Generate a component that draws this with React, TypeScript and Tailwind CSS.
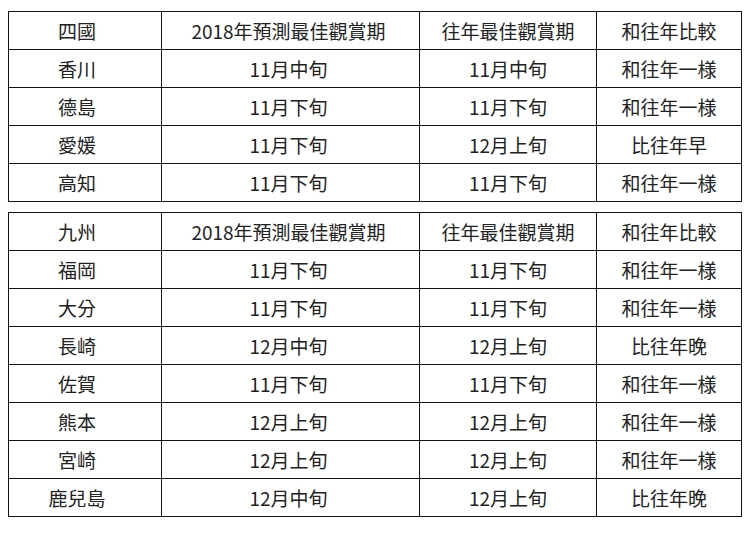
const shikoku = [
  ["四國", "2018年預測最佳觀賞期", "往年最佳觀賞期", "和往年比較"],
  ["香川", "11月中旬", "11月中旬", "和往年一様"],
  ["德島", "11月下旬", "11月下旬", "和往年一様"],
  ["愛媛", "11月下旬", "12月上旬", "比往年早"],
  ["高知", "11月下旬", "11月下旬", "和往年一様"],
];

const kyushu = [
  ["九州", "2018年預測最佳觀賞期", "往年最佳觀賞期", "和往年比較"],
  ["福岡", "11月下旬", "11月下旬", "和往年一様"],
  ["大分", "11月下旬", "11月下旬", "和往年一様"],
  ["長崎", "12月中旬", "12月上旬", "比往年晚"],
  ["佐賀", "11月下旬", "11月下旬", "和往年一様"],
  ["熊本", "12月上旬", "12月上旬", "和往年一様"],
  ["宮崎", "12月上旬", "12月上旬", "和往年一様"],
  ["鹿兒島", "12月中旬", "12月上旬", "比往年晚"],
];

const colClass = ["w-[153px] pr-4", "w-[258px] pr-1", "w-[177px]", "w-[145px]"];

const BloomTable = ({ rows }: { rows: string[][] }) => (
  <table className="w-[734px] table-fixed border-collapse">
    <tbody>
      {rows.map((row, i) => (
        <tr key={i} className="h-[38px]">
          {row.map((cell, j) => (
            <td
              key={j}
              className={`${colClass[j]} border-[1.5px] border-[#111] p-0 text-center align-middle leading-none`}
            >
              {cell}
            </td>
          ))}
        </tr>
      ))}
    </tbody>
  </table>
);

export default function App() {
  return (
    <div
      className="flex h-[536px] w-[750px] flex-col gap-[10px] bg-white pl-[8px] pt-[11px] text-[19px] text-[#222]"
      style={{ fontFamily: '"Noto Sans CJK TC", "Noto Sans", sans-serif' }}
    >
      <BloomTable rows={shikoku} />
      <BloomTable rows={kyushu} />
    </div>
  );
}
